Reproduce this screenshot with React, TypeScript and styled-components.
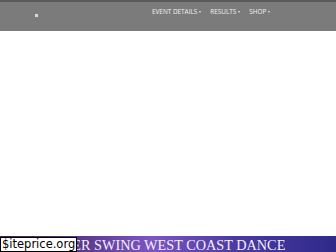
import React from "react";
import styled, { createGlobalStyle } from "styled-components";

const Global = createGlobalStyle`
  html, body { margin: 0; padding: 0; background: #fff; }
  body { width: 336px; height: 252px; overflow: hidden; font-family: "Open Sans", sans-serif; }
`;

const Page = styled.div`
  display: flex;
  flex-direction: column;
  height: 252px;
  position: relative;
`;

const Header = styled.header`
  height: 31px;
  background: #7b7b7b;
  border-top: 2px solid #5a5a5a;
  box-sizing: border-box;
  display: flex;
  align-items: flex-start;
  padding: 6px 0 0 35px;
`;

const LogoDot = styled.div`
  width: 3px;
  height: 3px;
  margin-top: 6px;
  background: #d8d8d8;
`;

const Nav = styled.nav`
  display: flex;
  gap: 9px;
  margin-left: 114px;
`;

const NavItem = styled.span`
  color: #f2f2f2;
  font-size: 6.4px;
  line-height: 8px;
  display: flex;
  align-items: center;
  gap: 2px;
`;

const Caret = styled.span`
  width: 0;
  height: 0;
  border-left: 1.5px solid transparent;
  border-right: 1.5px solid transparent;
  border-top: 2px solid #e6e6e6;
`;

const Body = styled.main`
  flex: 1;
  background: #fff;
`;

const Banner = styled.div`
  height: 16px;
  background: linear-gradient(90deg, #3a2156 0%, #5b3a8f 25%, #7c55c2 45%, #4a3aa2 70%, #2e2a8a 100%);
  display: flex;
  align-items: flex-end;
  overflow: hidden;
`;

const BannerText = styled.div`
  font-family: "Liberation Serif", serif;
  color: #f4eefc;
  font-size: 15.5px;
  line-height: 15px;
  white-space: nowrap;
  margin-left: 35px;
  transform: scaleX(0.92);
  transform-origin: left;
`;

const Watermark = styled.div`
  position: absolute;
  left: 0;
  bottom: 0;
  background: #fff;
  border: 1px solid #000;
  padding: 0 1px;
  font-family: "DejaVu Sans", sans-serif;
  font-size: 11.5px;
  line-height: 13px;
  color: #000;
`;

export default function App() {
  return (
    <Page>
      <Global />
      <Header>
        <LogoDot />
        <Nav>
          <NavItem>EVENT DETAILS <Caret /></NavItem>
          <NavItem>RESULTS <Caret /></NavItem>
          <NavItem>SHOP <Caret /></NavItem>
        </Nav>
      </Header>
      <Body />
      <Banner>
        <BannerText>WINTER SWING WEST COAST DANCE</BannerText>
      </Banner>
      <Watermark>$iteprice.org</Watermark>
    </Page>
  );
}
